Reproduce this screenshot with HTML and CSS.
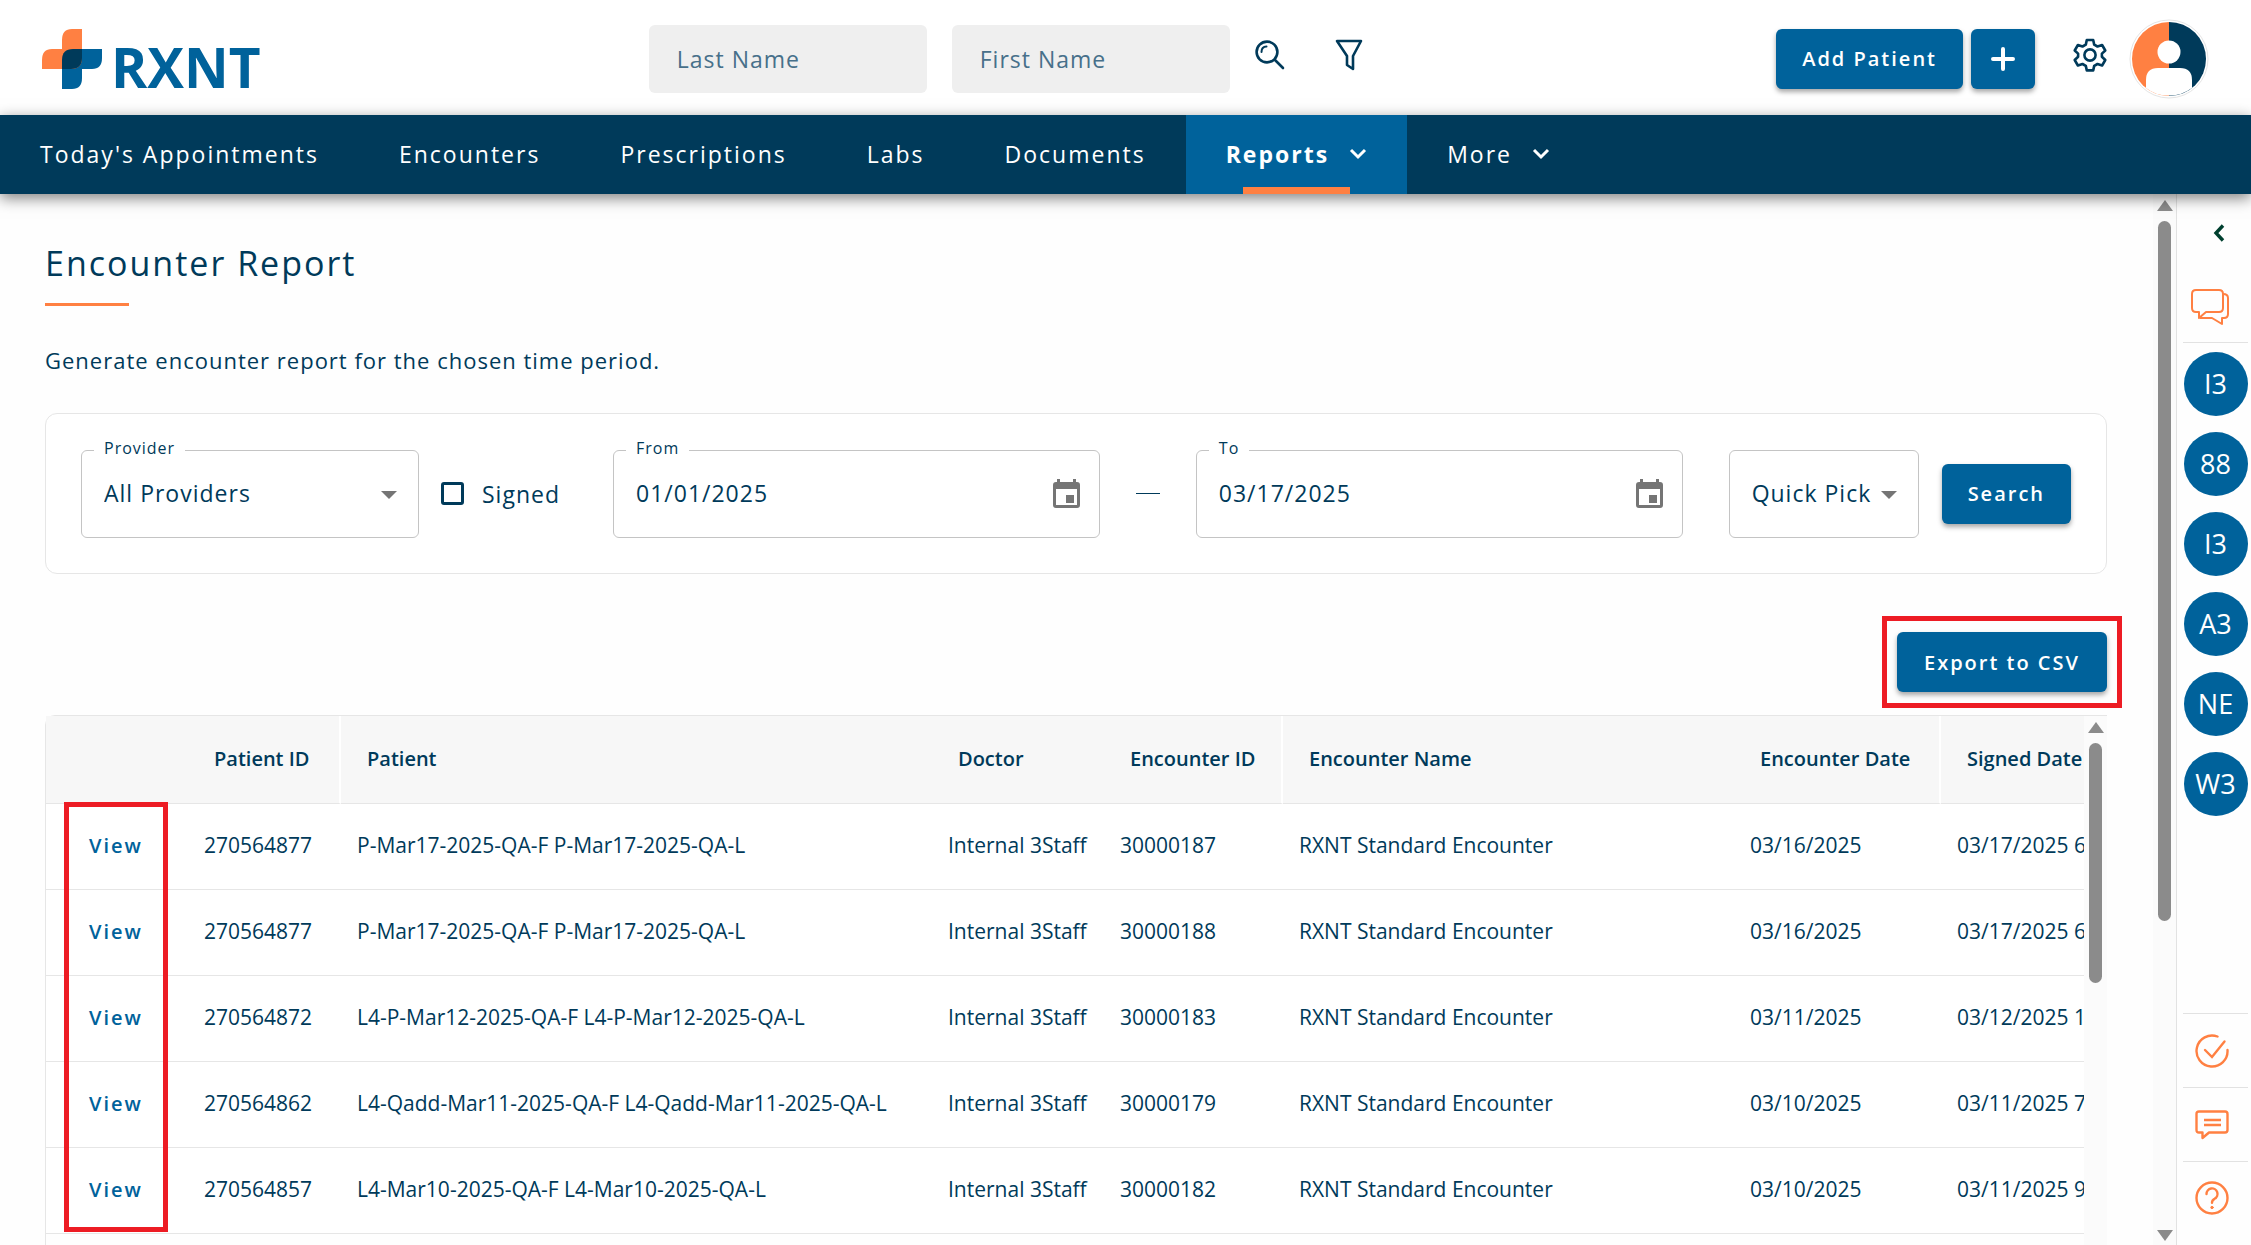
FILE: index.html
```html
<!DOCTYPE html>
<html lang="en">
<head>
    <meta charset="UTF-8">
    <meta name="viewport" content="width=device-width, initial-scale=1.0">
    <title>RXNT - Encounter Report</title>
    <link rel="stylesheet" href="styles.css">
</head>
<body>
    <header class="topbar">
        <a href="#" class="logo" aria-label="RXNT">
            <svg width="61" height="60" viewBox="0 0 61 60">
                <path d="M20 60V31Q20 20 31 20H60V29Q60 40 50 40H40V49Q40 60 30 60Z" fill="#00629b"/>
                <path d="M40 0V29Q40 40 29 40H0V31Q0 20 10 20H20V11Q20 0 30 0Z" fill="#ff8042"/>
                <path d="M31 20H40V29Q40 40 29 40H20V31Q20 20 31 20Z" fill="#003a5a"/>
            </svg>
            <span>RXNT</span>
        </a>
        <form class="search">
            <input type="text" placeholder="Last Name" aria-label="Last Name">
            <input type="text" placeholder="First Name" aria-label="First Name">
            <button type="button" class="icon-btn" aria-label="Search">
                <svg width="30" height="30" viewBox="0 0 30 30" fill="none" stroke="#003a5a" stroke-width="2.6" stroke-linecap="round">
                    <circle cx="12" cy="12" r="10.4"/>
                    <path d="M20 20l8 8"/>
                    <path d="M6.500 12q0-5.500 5-5.500" stroke-width="2"/>
                </svg>
            </button>
            <button type="button" class="icon-btn" aria-label="Filter">
                <svg width="28" height="32" viewBox="0 0 28 32" fill="none" stroke="#003a5a" stroke-width="2.6" stroke-linejoin="round">
                    <path d="M2 2h24l-8 15v13l-6-4v-9z"/>
                </svg>
            </button>
        </form>
        <div class="actions">
            <button type="button" class="btn">Add Patient</button>
            <button type="button" class="btn btn-plus" aria-label="Add">
                <svg width="24" height="24" viewBox="0 0 24 24" stroke="#fff" stroke-width="4" stroke-linecap="round"><path d="M12 2v20M2 12h20"/></svg>
            </button>
            <button type="button" class="icon-btn settings" aria-label="Settings">
                <svg width="34" height="34" viewBox="0 0 34 34" fill="none" stroke="#003a5a" stroke-width="2.6" stroke-linejoin="round">
                    <path d="M13.800 2h6.400l1 4.600 3.300 1.900 4.600-1.500 3.200 5.500-3.400 3.100v3.200l3.400 3.200-3.200 5.500-4.600-1.500-3.300 1.900-1 4.500h-6.400l-1-4.500-3.300-1.900-4.600 1.500-3.200-5.500 3.400-3.200v-3.200l-3.400-3.100 3.200-5.500 4.600 1.500 3.300-1.900z"/>
                    <circle cx="17" cy="17" r="5.600"/>
                </svg>
            </button>
            <button type="button" class="icon-btn" aria-label="Profile">
                <svg width="80" height="80" viewBox="0 0 80 80">
                    <circle cx="40" cy="40" r="39" fill="#fff" stroke="#e4e4e4"/>
                    <path d="M40 3a37 37 0 0 0 0 74z" fill="#ff8042"/>
                    <path d="M40 3a37 37 0 0 1 0 74z" fill="#003a5a"/>
                    <circle cx="40" cy="33" r="11.500" fill="#fff"/>
                    <path d="M17 69V61Q17 49 29 49H51Q63 49 63 61V69Q52 77 40 76.500Q27 77 17 69Z" fill="#fff"/>
                </svg>
            </button>
        </div>
    </header>

    <nav class="nav">
        <a href="#">Today's Appointments</a>
        <a href="#">Encounters</a>
        <a href="#">Prescriptions</a>
        <a href="#">Labs</a>
        <a href="#">Documents</a>
        <a href="#" class="active">Reports
            <svg width="18" height="12" viewBox="0 0 18 12" fill="none" stroke="#fff" stroke-width="3"><path d="M2 2l7 7 7-7"/></svg>
        </a>
        <a href="#">More
            <svg width="18" height="12" viewBox="0 0 18 12" fill="none" stroke="#fff" stroke-width="3"><path d="M2 2l7 7 7-7"/></svg>
        </a>
    </nav>

    <div class="layout">
        <main class="content">
            <h1>Encounter Report</h1>
            <p class="intro">Generate encounter report for the chosen time period.</p>

            <form class="filters">
                <div class="field provider">
                    <label for="provider">Provider</label>
                    <select id="provider"><option>All Providers</option></select>
                    <svg class="caret" width="16" height="8" viewBox="0 0 16 8"><path d="M0 0h16l-8 8z" fill="#757575"/></svg>
                </div>
                <label class="signed"><input type="checkbox"> Signed</label>
                <div class="field date">
                    <label for="from">From</label>
                    <input type="text" id="from" value="01/01/2025">
                    <svg class="calendar" width="27" height="29" viewBox="0 0 27 29"><path d="M4 0h3v3h13V0h3v3h1q3 0 3 3v20q0 3-3 3H3q-3 0-3-3V6q0-3 3-3h1zM3 10v16h21V10zM13 16h8v8h-8z" fill="#757575" fill-rule="evenodd"/></svg>
                </div>
                <span class="dash"></span>
                <div class="field date">
                    <label for="to">To</label>
                    <input type="text" id="to" value="03/17/2025">
                    <svg class="calendar" width="27" height="29" viewBox="0 0 27 29"><path d="M4 0h3v3h13V0h3v3h1q3 0 3 3v20q0 3-3 3H3q-3 0-3-3V6q0-3 3-3h1zM3 10v16h21V10zM13 16h8v8h-8z" fill="#757575" fill-rule="evenodd"/></svg>
                </div>
                <div class="field quick">
                    <select aria-label="Quick Pick"><option>Quick Pick</option></select>
                    <svg class="caret" width="16" height="8" viewBox="0 0 16 8"><path d="M0 0h16l-8 8z" fill="#757575"/></svg>
                </div>
                <button type="button" class="btn">Search</button>
            </form>

            <div class="export">
                <button type="button" class="btn">Export to CSV</button>
            </div>

            <div class="report">
                <div class="table-wrap">
                    <table>
                        <colgroup>
                            <col class="c-view"><col class="c-pid"><col class="c-patient"><col class="c-doctor">
                            <col class="c-eid"><col class="c-ename"><col class="c-date"><col class="c-signed">
                        </colgroup>
                        <thead>
                            <tr>
                                <th></th>
                                <th class="split">Patient ID</th>
                                <th>Patient</th>
                                <th>Doctor</th>
                                <th class="split">Encounter ID</th>
                                <th>Encounter Name</th>
                                <th class="split">Encounter Date</th>
                                <th>Signed Date</th>
                            </tr>
                        </thead>
                        <tbody>
                            <tr>
                                <td><a href="#">View</a></td>
                                <td>270564877</td>
                                <td>P-Mar17-2025-QA-F P-Mar17-2025-QA-L</td>
                                <td>Internal 3Staff</td>
                                <td>30000187</td>
                                <td>RXNT Standard Encounter</td>
                                <td>03/16/2025</td>
                                <td>03/17/2025 6</td>
                            </tr>
                            <tr>
                                <td><a href="#">View</a></td>
                                <td>270564877</td>
                                <td>P-Mar17-2025-QA-F P-Mar17-2025-QA-L</td>
                                <td>Internal 3Staff</td>
                                <td>30000188</td>
                                <td>RXNT Standard Encounter</td>
                                <td>03/16/2025</td>
                                <td>03/17/2025 6</td>
                            </tr>
                            <tr>
                                <td><a href="#">View</a></td>
                                <td>270564872</td>
                                <td>L4-P-Mar12-2025-QA-F L4-P-Mar12-2025-QA-L</td>
                                <td>Internal 3Staff</td>
                                <td>30000183</td>
                                <td>RXNT Standard Encounter</td>
                                <td>03/11/2025</td>
                                <td>03/12/2025 1</td>
                            </tr>
                            <tr>
                                <td><a href="#">View</a></td>
                                <td>270564862</td>
                                <td>L4-Qadd-Mar11-2025-QA-F L4-Qadd-Mar11-2025-QA-L</td>
                                <td>Internal 3Staff</td>
                                <td>30000179</td>
                                <td>RXNT Standard Encounter</td>
                                <td>03/10/2025</td>
                                <td>03/11/2025 7</td>
                            </tr>
                            <tr>
                                <td><a href="#">View</a></td>
                                <td>270564857</td>
                                <td>L4-Mar10-2025-QA-F L4-Mar10-2025-QA-L</td>
                                <td>Internal 3Staff</td>
                                <td>30000182</td>
                                <td>RXNT Standard Encounter</td>
                                <td>03/10/2025</td>
                                <td>03/11/2025 9</td>
                            </tr>
                        </tbody>
                    </table>
                </div>
                <div class="scrollbar">
                    <span class="arrow up"></span>
                    <span class="thumb thumb-table"></span>
                </div>
                <div class="highlight"></div>
            </div>
        </main>

        <div class="scrollbar page-scroll">
            <span class="arrow up"></span>
            <span class="thumb thumb-page"></span>
            <span class="arrow down"></span>
        </div>

        <aside class="side">
            <button type="button" class="icon-btn collapse" aria-label="Expand panel">
                <svg width="12" height="18" viewBox="0 0 12 18" fill="none" stroke="#00402f" stroke-width="3.400"><path d="M10 1.500L3 9l7 7.500"/></svg>
            </button>
            <button type="button" class="icon-btn chat" aria-label="Chat">
                <svg width="38" height="36" viewBox="0 0 38 36" fill="none" stroke="#ff8042" stroke-width="2" stroke-linejoin="round">
                    <path d="M5 1h23q4 0 4 4v14q0 4-4 4H15l-7 6v-6H5q-4 0-4-4V5q0-4 4-4z"/>
                    <path d="M32 5q5 0 5 4v16q0 4-4 4h-2v6l-10-6H9"/>
                </svg>
            </button>
            <div class="people">
                <a href="#">I3</a>
                <a href="#">88</a>
                <a href="#">I3</a>
                <a href="#">A3</a>
                <a href="#">NE</a>
                <a href="#">W3</a>
            </div>
            <div class="tools">
                <button type="button" class="icon-btn" aria-label="Tasks">
                    <svg width="34" height="34" viewBox="0 0 34 34" fill="none" stroke="#ff8042" stroke-width="2.400" stroke-linecap="round">
                        <path d="M22.500 2.500A15.500 15.500 0 1 0 32.500 16"/>
                        <path d="M10 16l7 7L29.500 7.500"/>
                    </svg>
                </button>
                <button type="button" class="icon-btn" aria-label="Messages">
                    <svg width="34" height="30" viewBox="0 0 34 30" fill="none" stroke="#ff8042" stroke-width="2.400" stroke-linejoin="round">
                        <path d="M4 1.500h26q2.500 0 2.500 2.500v16q0 2.500-2.500 2.500H14l-6.500 5.500v-5.500H4q-2.500 0-2.500-2.500V4q0-2.500 2.500-2.500z"/>
                        <path d="M9 10h17M9 15h17"/>
                    </svg>
                </button>
                <button type="button" class="icon-btn" aria-label="Help">
                    <svg width="34" height="34" viewBox="0 0 34 34" fill="none" stroke="#ff8042" stroke-width="2.400" stroke-linecap="round">
                        <circle cx="17" cy="17" r="15.500"/>
                        <path d="M11.500 13a5.500 5.500 0 1 1 8 4.800q-2.500 1.200-2.500 4"/>
                        <circle cx="17" cy="26.500" r="1.200" fill="#ff8042" stroke-width="1"/>
                    </svg>
                </button>
            </div>
        </aside>
    </div>
</body>
</html>
```
FILE: styles.css
```css
* {
    box-sizing: border-box;
}

body {
    margin: 0;
    height: 100vh;
    display: flex;
    flex-direction: column;
    overflow: hidden;
    font-family: "Open Sans", sans-serif;
    font-size: 21px;
    color: #003a5a;
    background: #fefefe;
}

a {
    text-decoration: none;
    color: inherit;
}

button, input, select {
    font-family: inherit;
    color: inherit;
}

svg {
    display: block;
    flex: none;
}

/* top bar */
.topbar {
    display: grid;
    grid-template-columns: 28% auto 1fr;
    align-items: center;
    height: 115px;
    flex: none;
    padding: 2px 42px 0;
    background: #fff;
}

.logo {
    display: flex;
    align-items: flex-end;
    gap: 8px;
    height: 60px;
}

.logo span {
    font-size: 55px;
    line-height: 44px;
    font-weight: 700;
    color: #00629b;
}

.search {
    display: flex;
    align-items: center;
}

.search input {
    width: 278px;
    height: 68px;
    margin-right: 25px;
    padding: 0 28px;
    border: none;
    border-radius: 6px;
    background: #efefef;
    font-size: 23px;
    letter-spacing: 1px;
}

.search input::placeholder {
    color: #47708a;
    opacity: 1;
}

.icon-btn {
    display: flex;
    padding: 0;
    border: none;
    background: none;
    cursor: pointer;
}

.search .icon-btn {
    padding-bottom: 8px;
}

.search .icon-btn + .icon-btn {
    margin-left: 50px;
}

.actions {
    display: flex;
    align-items: center;
    justify-content: flex-end;
    gap: 8px;
}

.btn {
    height: 60px;
    padding: 0 26px;
    border: none;
    border-radius: 6px;
    background: #00629b;
    color: #fff;
    font-size: 20px;
    font-weight: 600;
    letter-spacing: 2px;
    white-space: nowrap;
    cursor: pointer;
    box-shadow: 0 3px 5px rgba(0, 0, 0, 0.35);
}

.btn-plus {
    padding: 0 20px;
}

.settings {
    margin: 0 14px 0 30px;
    padding-bottom: 8px;
}

/* navigation */
.nav {
    display: flex;
    height: 79px;
    flex: none;
    background: #003a5a;
    box-shadow: 0 4px 14px rgba(0, 0, 0, 0.5);
    position: relative;
    z-index: 1;
}

.nav a {
    display: flex;
    align-items: center;
    gap: 20px;
    padding: 0 40px 2px;
    color: #fff;
    font-size: 23px;
    letter-spacing: 2px;
    white-space: nowrap;
}

.nav .active {
    position: relative;
    background: #00629b;
    font-weight: 700;
}

.nav .active::after {
    content: "";
    position: absolute;
    bottom: 0;
    left: 57px;
    right: 57px;
    height: 7px;
    background: #ff8042;
}

/* page */
.layout {
    display: flex;
    flex: 1;
    min-height: 0;
}

.content {
    flex: 1;
    min-width: 0;
    padding: 49px 46px 0 45px;
    overflow: hidden;
}

h1 {
    margin: 0;
    font-size: 34px;
    line-height: 40px;
    font-weight: 400;
    letter-spacing: 2px;
}

h1::after {
    content: "";
    display: block;
    width: 84px;
    height: 3px;
    margin-top: 20px;
    background: #ff8042;
}

.intro {
    margin: 38px 0 36px;
    font-size: 22px;
    line-height: 33px;
    letter-spacing: 1px;
}

.filters {
    display: flex;
    align-items: center;
    height: 161px;
    padding: 0 35px;
    border: 1px solid #e6e6e6;
    border-radius: 12px;
    background: #fff;
}

.field {
    position: relative;
    height: 88px;
    border: 1px solid #c4c4c4;
    border-radius: 6px;
}

.field label {
    position: absolute;
    top: -15px;
    left: 12px;
    padding: 0 10px;
    background: #fff;
    font-size: 16px;
    line-height: 24px;
    letter-spacing: 1px;
}

.field input, .field select {
    width: 100%;
    height: 100%;
    padding: 0 22px 2px;
    border: none;
    border-radius: 6px;
    background: transparent;
    appearance: none;
    font-size: 23px;
    letter-spacing: 1px;
}

.caret {
    position: absolute;
    right: 21px;
    top: 40px;
    pointer-events: none;
}

.calendar {
    position: absolute;
    right: 19px;
    top: 28px;
}

.provider {
    width: 338px;
}

.signed {
    display: flex;
    align-items: center;
    gap: 18px;
    width: 142px;
    margin: 0 30px 0 22px;
    font-size: 23px;
    letter-spacing: 1px;
}

.signed input {
    appearance: none;
    width: 23px;
    height: 23px;
    margin: 0;
    border: 3px solid #003a5a;
    border-radius: 3px;
}

.date {
    flex: 1;
}

.dash {
    width: 24px;
    height: 1px;
    margin: 0 36px;
    background: #003a5a;
}

.quick {
    width: 190px;
    margin: 0 23px 0 46px;
}

/* export */
.export {
    width: 240px;
    margin: 42px -15px 0 auto;
    padding: 11px 10px;
    border: 5px solid #ed1c24;
}

.export .btn {
    width: 100%;
}

/* report table */
.report {
    position: relative;
    display: flex;
    height: 600px;
    margin-top: 7px;
    border-left: 1px solid #e6e6e6;
    border-top: 1px solid #e6e6e6;
    border-radius: 10px 0 0 0;
}

.table-wrap {
    flex: 1;
    min-width: 0;
    overflow: hidden;
}

table {
    table-layout: fixed;
    width: 2160px;
    border-collapse: separate;
    border-spacing: 0;
    background: #fff;
}

.c-view { width: 142px; }
.c-pid { width: 153px; }
.c-patient { width: 591px; }
.c-doctor { width: 172px; }
.c-eid { width: 179px; }
.c-ename { width: 451px; }
.c-date { width: 207px; }

th, td {
    height: 86px;
    padding: 0 0 3px 16px;
    border-bottom: 1px solid #e6e6e6;
    text-align: left;
    white-space: nowrap;
}

th {
    height: 88px;
    padding-left: 26px;
    background: #f7f7f7;
    font-size: 20px;
    font-weight: 600;
}

th.split {
    border-right: 2px solid #fff;
}

td a {
    margin-left: 27px;
    color: #00629b;
    font-size: 20px;
    font-weight: 600;
    letter-spacing: 2px;
}

.highlight {
    position: absolute;
    top: 86px;
    left: 18px;
    width: 104px;
    height: 430px;
    border: 5px solid #ed1c24;
    pointer-events: none;
}

/* scrollbars */
.scrollbar {
    display: flex;
    flex-direction: column;
    align-items: center;
    width: 23px;
    padding-top: 6px;
    background: #fbfbfb;
}

.arrow {
    border: 8px solid transparent;
}

.arrow.up {
    border-top: none;
    border-bottom: 11px solid #8b8b8b;
}

.arrow.down {
    margin: auto 0 4px;
    border-bottom: none;
    border-top: 11px solid #8b8b8b;
}

.thumb {
    width: 13px;
    margin-top: 10px;
    border-radius: 7px;
    background: #8b8b8b;
}

.thumb-table {
    height: 240px;
}

.thumb-page {
    height: 67%;
}

/* side panel */
.side {
    display: flex;
    flex-direction: column;
    align-items: center;
    width: 75px;
    padding: 30px 3px 0 6px;
    border-left: 1px solid #e2e2e2;
    background: #fefefe;
}

.page-scroll {
    flex: none;
}

.collapse {
    margin: 0 0 47px 6px;
}

.chat {
    justify-content: center;
    width: 100%;
    height: 54px;
    padding-right: 11px;
    border-bottom: 1px solid #e2e2e2;
}

.people {
    display: grid;
    gap: 16px;
    margin-top: 9px;
}

.people a {
    display: flex;
    align-items: center;
    justify-content: center;
    width: 64px;
    height: 64px;
    padding-bottom: 2px;
    border-radius: 50%;
    background: #00629b;
    color: #fff;
    font-size: 27px;
}

.tools {
    width: 100%;
    margin-top: auto;
}

.tools .icon-btn {
    justify-content: center;
    align-items: center;
    width: 100%;
    height: 74px;
    padding-right: 8px;
    border-top: 1px solid #e2e2e2;
}

.tools .icon-btn:last-child {
    height: 84px;
    padding-bottom: 12px;
}
```
